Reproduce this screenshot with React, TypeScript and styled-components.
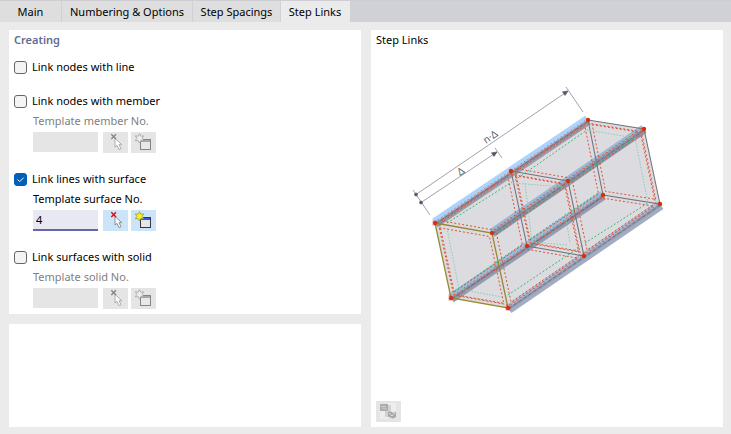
import React, { useState } from "react";
import styled, { createGlobalStyle } from "styled-components";

const GlobalStyle = createGlobalStyle`
  * { box-sizing: border-box; }
  body {
    margin: 0;
    background: #ebebeb;
    color: #000;
    font-family: "Noto Sans", "Open Sans", sans-serif;
    font-size: 11px;
    line-height: 16px;
  }
  button, input { font: inherit; }
`;

const Page = styled.div`
  min-height: 100vh;
  display: flex;
  flex-direction: column;
`;

const TabBar = styled.div`
  display: flex;
  height: 22px;
  background: #d0d0d7;
  border-top: 1px solid #cdcdd3;
`;

const Tab = styled.button<{ $active: boolean; $width: number }>`
  width: ${(p) => p.$width}px;
  flex: none;
  padding: 0;
  border: 0;
  border-right: 1px solid ${(p) => (p.$active ? "#ebebeb" : "#d0d0d7")};
  background: ${(p) => (p.$active ? "#ebebeb" : "#dedede")};
  color: #000;
  white-space: nowrap;
`;

const Content = styled.main`
  flex: 1;
  display: grid;
  grid-template-columns: 1fr 1fr;
  gap: 10px;
  padding: 8px 8px 7px 9px;
`;

const Column = styled.div`
  display: flex;
  flex-direction: column;
  gap: 10px;
`;

const Panel = styled.section<{ $fill?: boolean }>`
  flex: ${(p) => (p.$fill ? "1" : "none")};
  display: flex;
  flex-direction: column;
  padding: 2px 5px 5px;
  background: #fff;
`;

const Heading = styled.h2<{ $accent?: boolean }>`
  margin: 0;
  font-size: 11px;
  line-height: 16px;
  font-weight: ${(p) => (p.$accent ? 600 : 400)};
  color: ${(p) => (p.$accent ? "#5f6d94" : "#000")};
`;

const Options = styled.div`
  display: flex;
  flex-direction: column;
  gap: 18px;
  padding-top: 11px;
`;

const CheckLabel = styled.label`
  display: flex;
  align-items: center;
  gap: 5px;
  height: 16px;
`;

const Check = styled.input`
  appearance: none;
  width: 13px;
  height: 13px;
  margin: 0;
  border: 1px solid #666;
  border-radius: 3px;
  background: #f4f4f4;
  &:checked {
    border-color: #005fb8;
    background: #005fb8
      url("data:image/svg+xml,%3Csvg xmlns='http://www.w3.org/2000/svg' viewBox='0 0 11 11'%3E%3Cpath d='M2.5 5.5 4.7 7.6 8.7 3.6' fill='none' stroke='white'/%3E%3C/svg%3E");
  }
`;

const Template = styled.div<{ $enabled: boolean }>`
  display: flex;
  flex-direction: column;
  gap: 3px;
  padding: 4px 0 0 19px;
  color: ${(p) => (p.$enabled ? "#000" : "#808080")};
`;

const FieldRow = styled.div`
  display: flex;
  gap: 3px;
  height: 21px;
`;

const NumberField = styled.input`
  width: 65px;
  height: 21px;
  margin-right: 2px;
  padding: 0 3px;
  border: 0;
  border-bottom: 2px solid #6464a8;
  border-radius: 0;
  outline: 0;
  background: #e8e8f2;
  color: #000;
  &:disabled {
    height: 20px;
    border: 0;
    background: #e5e5e5;
  }
`;

const IconButton = styled.button`
  display: grid;
  place-items: center;
  width: 25px;
  height: 21px;
  padding: 0;
  border: 0;
  background: #cce4f7;
  &:disabled { background: #e5e5e5; }
`;

const Figure = styled.div`
  flex: 1;
  display: flex;
  align-items: center;
  justify-content: center;
  svg { flex: none; }
`;

const Footer = styled.div`
  display: flex;
  height: 21px;
  button { background: #e5e5e5; }
`;

function PickIcon({ on }: { on: boolean }) {
  return (
    <svg width="19" height="19" viewBox="0 0 19 19" aria-hidden="true">
      <path
        d="M9 5.5V14l2-1.6 2 4.2 2-.9-2-4h2.8z"
        fill="#fff"
        stroke={on ? "#85858c" : "#a5a5a5"}
        strokeWidth=".9"
      />
      <path d="M5.3 1.3 10 6M10 1.3 5.3 6" stroke={on ? "#f00000" : "#858585"} strokeWidth="1.4" />
    </svg>
  );
}

function NewIcon({ on }: { on: boolean }) {
  return (
    <svg width="19" height="19" viewBox="0 0 19 19" aria-hidden="true">
      <rect x="6.5" y="6.5" width="10" height="10" fill={on ? "#e6e6ea" : "#e8e8e8"} stroke={on ? "#38383e" : "#858585"} />
      <path d="M7 8h9" stroke={on ? "#3159e8" : "#a8a8a8"} strokeWidth="2" />
      <path
        d="m5.5.7 1.3 2.5 2.9-.3-1.6 2.4 1.6 2.5-2.9-.2-1.3 2.5-1.3-2.5-2.9.2 1.6-2.5-1.6-2.4 2.9.3z"
        fill={on ? "#fff200" : "#ededed"}
        stroke={on ? "#8d8d58" : "#999"}
        strokeWidth=".7"
      />
    </svg>
  );
}

function ImageIcon() {
  return (
    <svg width="17" height="17" viewBox="0 0 17 17" aria-hidden="true">
      <path d="M8 0h8v8H8zM0 8h8v8H0z" fill="#eee" />
      <path d="M5 8h3v6H5zM8 2h3v6H8z" fill="#d2d2d2" />
      <rect x="0" y="1" width="8" height="7" fill="#acacac" />
      <path d="M1 3.5h5M2 6l2-1 3 1.5" stroke="#cfcfcf" fill="none" />
      <path d="M8 8.5h3l2 1.5 3-1v5l-3 1.5-5-2z" fill="#a8a8a8" />
      <path d="m9 10 3 3 3-3" stroke="#dcdcdc" fill="none" />
    </svg>
  );
}

type Point = [number, number];
const FRONT: Point[] = [[435, 223], [492, 233], [508, 308], [451, 298]];
const MIDDLE: Point[] = [[511, 171], [568, 181], [584, 256], [527, 246]];
const BACK: Point[] = [[588, 120], [644, 129], [660, 204], [603, 195]];
const SECTIONS = [FRONT, MIDDLE, BACK];

const path = (pts: Point[]) => "M" + pts.map((p) => p.join(" ")).join("L");
const shift = (p: Point, d: number): Point => [p[0] + d * 0.56, p[1] + d * 0.83];
const rail = (i: number, d = 0) => path([shift(FRONT[i], d), shift(BACK[i], d)]);

const SURFACES = [0, 1].flatMap((s) =>
  [0, 1, 2, 3].map((i) => {
    const j = (i + 1) % 4;
    return [SECTIONS[s][i], SECTIONS[s + 1][i], SECTIONS[s + 1][j], SECTIONS[s][j]];
  })
);

function inner([a, b, c, d]: Point[], u: number, v: number): Point[] {
  const at = (s: number, t: number): Point => [
    (a[0] * (1 - s) + b[0] * s) * (1 - t) + (d[0] * (1 - s) + c[0] * s) * t,
    (a[1] * (1 - s) + b[1] * s) * (1 - t) + (d[1] * (1 - s) + c[1] * s) * t,
  ];
  return [at(u, v), at(1 - u, v), at(1 - u, 1 - v), at(u, 1 - v)];
}

// Distance of each rail's two faces from its axis: upper centre/width, lower centre/width.
const RAILS = [
  { i: 0, upper: [-2.5, 5], lower: [2.5, 5], light: "#acd3fb", dark: "#9b9dae" },
  { i: 3, upper: [-2, 5], lower: [2.5, 5], light: "#a0bcda", dark: "#929cb2" },
  { i: 1, upper: [-2, 5], lower: [2, 5], light: "#98b8d9", dark: "#8f9ab0" },
  { i: 2, upper: [-1.5, 4], lower: [3, 6], light: "#a8c4e0", dark: "#a2adc1" },
];

function StepDiagram() {
  return (
    <svg width="280" height="300" viewBox="407 75 280 300" fill="none" role="img" aria-label="Step links">
      <path d={path([FRONT[0], BACK[0], BACK[1], BACK[2], FRONT[2], FRONT[3]]) + "Z"} fill="#dcdbe0" />

      {RAILS.map((r) => (
        <g key={r.i}>
          <path d={rail(r.i, r.upper[0])} stroke={r.light} strokeWidth={r.upper[1]} />
          <path d={rail(r.i, r.lower[0])} stroke={r.dark} strokeWidth={r.lower[1]} />
          <path d={rail(r.i, 1)} stroke="#7c8094" strokeOpacity=".4" strokeWidth="3" />
          <path d={rail(r.i, 1)} stroke="#5c5c70" strokeOpacity=".7" strokeDasharray="4 2" />
          <path d={rail(r.i, -1)} stroke="#d84a26" strokeOpacity=".7" strokeDasharray="1.5 2.5" />
        </g>
      ))}

      <g stroke="#747482" strokeWidth="1.1">
        <path d={path(MIDDLE) + "Z"} />
        <path d={path(BACK) + "Z"} />
      </g>

      {SURFACES.map((q, i) => (
        <path key={i} d={path(inner(q, 0.05, 0.045)) + "Z"} stroke="#dc5535" strokeDasharray="2 2" />
      ))}
      {SECTIONS.map((s, i) => (
        <path key={i} d={path(inner(s, 0.06, 0.055)) + "Z"} stroke="#dc5535" strokeDasharray="2 2" />
      ))}

      <path
        d="M447 223 512 182M515 180 587 130M508 295 583 245M585 243 648 203M455 291 524 243M530 239 598 193M497 233 565 186M571 182 638 136"
        stroke="#2bb86b"
        strokeDasharray="1.8 2"
      />
      <path
        d="M447 228 459 289 502 297M513 183 563 187M525 183 532 242 568 245M565 213 570 243M587 130 635 138 648 203"
        stroke="#8ccdab"
        strokeDasharray="1.5 1.5"
      />

      <path d={path(FRONT) + "Z"} stroke="#938c2f" strokeWidth="1.3" />
      {SECTIONS.flat().map(([x, y]) => (
        <circle key={`${x}-${y}`} cx={x} cy={y} r="2.2" fill="#d33208" />
      ))}
      {[FRONT[0], FRONT[3], FRONT[2]].map(([x, y]) => (
        <rect key={x} x={x - 3} y={y - 3} width="6" height="6" fill="#d5324a" fillOpacity=".2" />
      ))}

      <g stroke="#a2a2ac" strokeWidth="1">
        <path d="M416 194.5 568 91M421 202.5 497 152M413 190l17 25M566 87l17 25M495 148l7 10" />
        <g fill="#55556a" stroke="#55556a" strokeWidth=".6">
          <circle cx="416" cy="194.5" r="1.5" />
          <circle cx="421" cy="202.5" r="1.5" />
          <path d="m568 91-3 4.5-2.5-3.7zM497 152l-3 4.5-2.5-3.7z" />
        </g>
      </g>
      <g fill="#5f5f6e" fontFamily="Noto Sans, sans-serif" fontSize="10">
        <text transform="translate(486 144) rotate(-34)">n·Δ</text>
        <text transform="translate(460 176) rotate(-34)">Δ</text>
      </g>
    </svg>
  );
}

interface OptionProps {
  label: string;
  template?: string;
  initial?: boolean;
  value?: string;
}

function LinkOption({ label, template, initial = false, value = "" }: OptionProps) {
  const [on, setOn] = useState(initial);
  const id = label.replace(/ /g, "-").toLowerCase();
  return (
    <div>
      <CheckLabel>
        <Check type="checkbox" checked={on} onChange={(e) => setOn(e.target.checked)} />
        {label}
      </CheckLabel>
      {template && (
        <Template $enabled={on}>
          <label htmlFor={id}>{template}</label>
          <FieldRow>
            <NumberField id={id} disabled={!on} defaultValue={value} />
            <IconButton disabled={!on} aria-label="Select in model">
              <PickIcon on={on} />
            </IconButton>
            <IconButton disabled={!on} aria-label="Create new">
              <NewIcon on={on} />
            </IconButton>
          </FieldRow>
        </Template>
      )}
    </div>
  );
}

const TABS = [
  { name: "Main", width: 62 },
  { name: "Numbering & Options", width: 131 },
  { name: "Step Spacings", width: 88 },
  { name: "Step Links", width: 69 },
];

export default function App() {
  const [active, setActive] = useState("Step Links");
  return (
    <Page>
      <GlobalStyle />
      <TabBar role="tablist">
        {TABS.map((t) => (
          <Tab
            key={t.name}
            role="tab"
            aria-selected={active === t.name}
            $active={active === t.name}
            $width={t.width}
            onClick={() => setActive(t.name)}
          >
            {t.name}
          </Tab>
        ))}
      </TabBar>
      <Content>
        <Column>
          <Panel>
            <Heading $accent>Creating</Heading>
            <Options>
              <LinkOption label="Link nodes with line" />
              <LinkOption label="Link nodes with member" template="Template member No." />
              <LinkOption label="Link lines with surface" template="Template surface No." initial value="4" />
              <LinkOption label="Link surfaces with solid" template="Template solid No." />
            </Options>
          </Panel>
          <Panel $fill />
        </Column>
        <Panel $fill>
          <Heading>Step Links</Heading>
          <Figure>
            <StepDiagram />
          </Figure>
          <Footer>
            <IconButton aria-label="Picture settings">
              <ImageIcon />
            </IconButton>
          </Footer>
        </Panel>
      </Content>
    </Page>
  );
}
